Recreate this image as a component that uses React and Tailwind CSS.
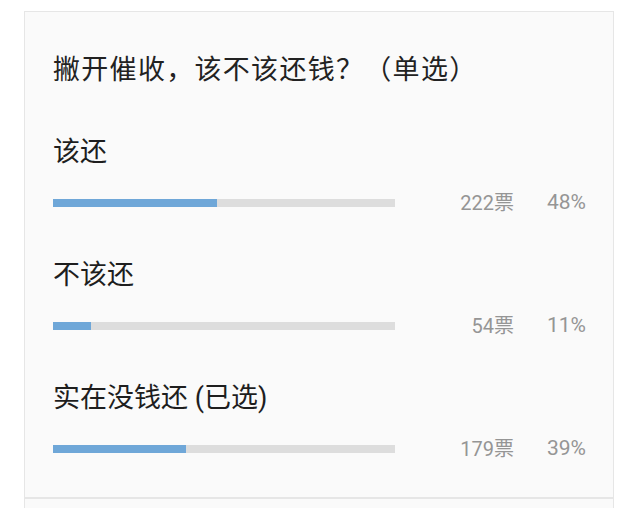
export default function App() {
  const font = { fontFamily: 'Roboto, "Noto Sans CJK SC", "Noto Sans", sans-serif' };
  const options = [
    { label: "该还", votes: "222票", pct: "48%", w: 48 },
    { label: "不该还", votes: "54票", pct: "11%", w: 11 },
    { label: "实在没钱还 (已选)", votes: "179票", pct: "39%", w: 39 },
  ];
  return (
    <div className="w-[640px] h-[508px] bg-white overflow-hidden" style={font}>
      <div className="ml-[24px] mt-[11px] w-[590px] border border-[#e6e6e6] bg-[#fafafa] pl-[28px] pr-[26px] pt-[40px] pb-[34px]">
        <div className="text-[27px] leading-[36px] text-[#222] tracking-[1.3px] whitespace-nowrap">撇开催收，该不该还钱？（单选）</div>
        <div className="mt-[46px] flex flex-col gap-[40px]">
          {options.map((o) => (
            <div key={o.label} className="flex flex-col">
              <div className="text-[27px] leading-[36px] text-[#1e1e1e]">{o.label}</div>
              <div className="mt-[19px] flex items-center h-[28px]">
                <div className="w-[342px] h-[8px] bg-[#dddddd] flex">
                  <div className="h-full bg-[#6fa7d8]" style={{ width: `${o.w}%` }} />
                </div>
                <div className="w-[119px] text-right text-[20px] text-[#959595]">{o.votes}</div>
                <div className="w-[72px] text-right text-[21px] text-[#959595]">{o.pct}</div>
              </div>
            </div>
          ))}
        </div>
      </div>
      <div className="ml-[24px] w-[590px] h-[40px] border border-[#e6e6e6] bg-[#fafafa]" />
    </div>
  );
}
